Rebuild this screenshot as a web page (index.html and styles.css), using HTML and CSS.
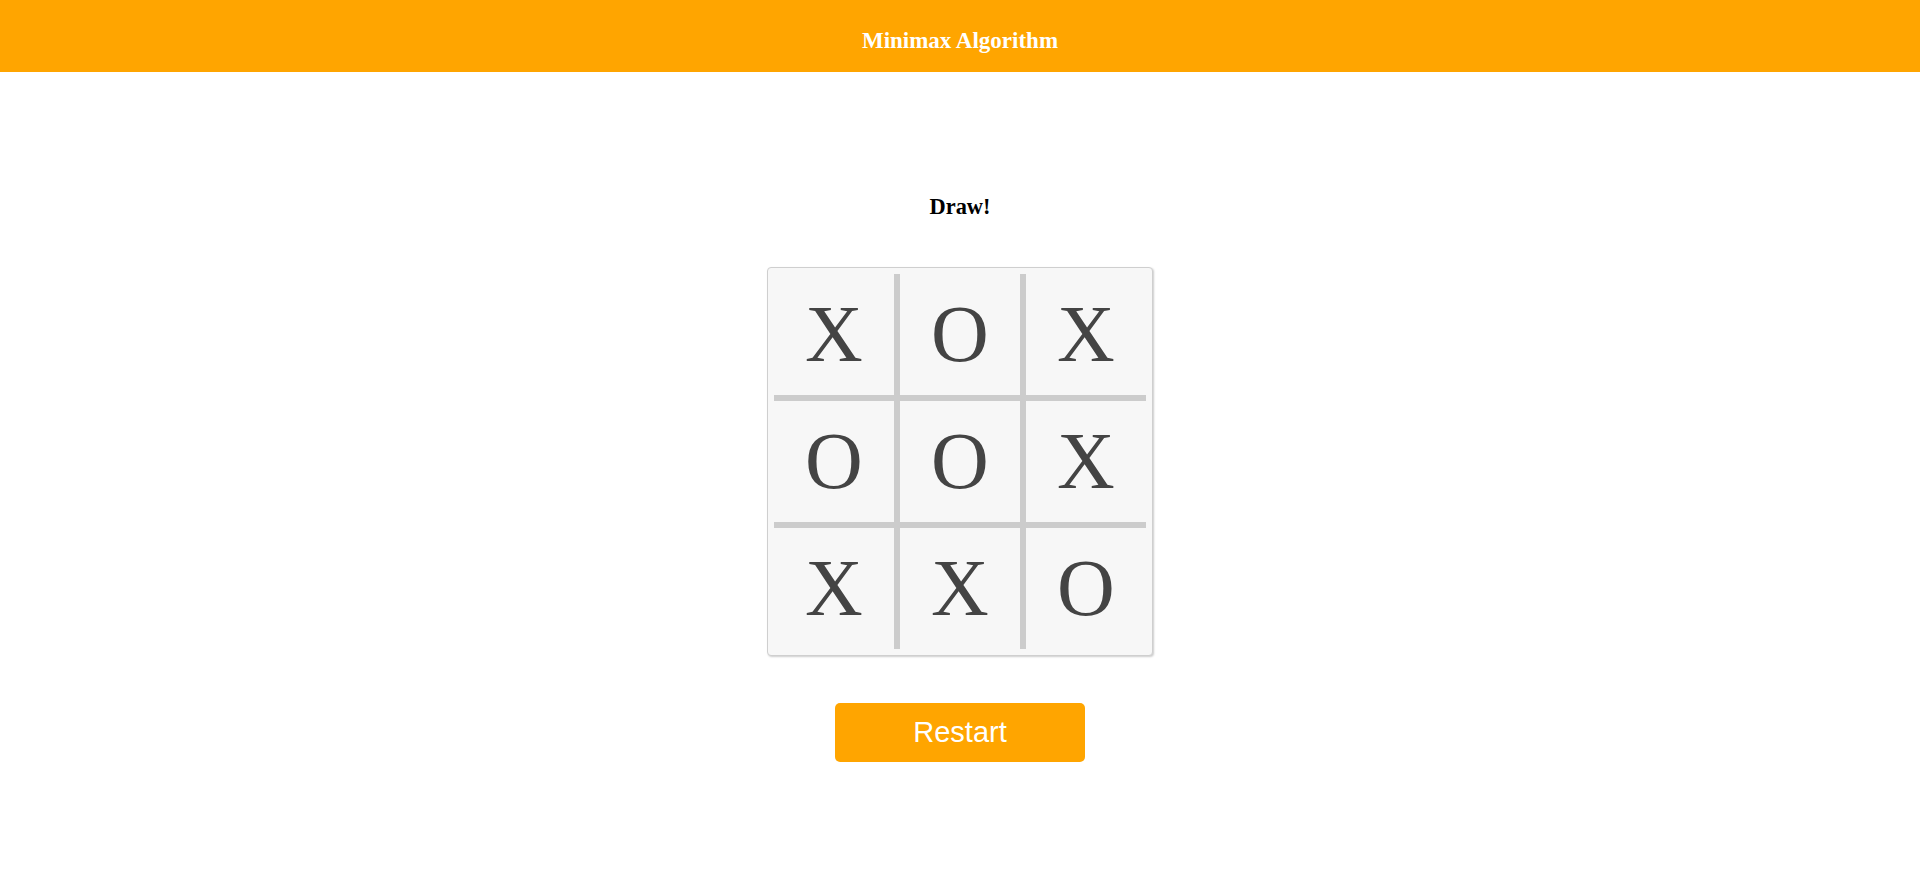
FILE: index.html
```html
<!DOCTYPE html>
<html lang="en">
<head>
<meta charset="utf-8">
<title>Minimax Algorithm</title>
<link rel="stylesheet" href="styles.css">
</head>
<body>
<header class="topbar">
  <h1 class="title">Minimax Algorithm</h1>
</header>
<main class="game">
  <div class="status">Draw!</div>
  <div class="board">
    <div class="grid">
      <div class="cell">X</div>
      <div class="cell">O</div>
      <div class="cell">X</div>
      <div class="cell">O</div>
      <div class="cell">O</div>
      <div class="cell">X</div>
      <div class="cell">X</div>
      <div class="cell">X</div>
      <div class="cell">O</div>
    </div>
  </div>
  <button class="restart" type="button">Restart</button>
</main>
</body>
</html>
```
FILE: styles.css
```css
html, body {
  margin: 0;
  padding: 0;
  background: #fff;
}
body {
  font-family: "Liberation Serif", "Times New Roman", serif;
}
.topbar {
  height: 72px;
  box-sizing: border-box;
  padding-top: 30px;
  background: #ffa500;
  text-align: center;
}
.title {
  margin: 0;
  font-size: 23px;
  line-height: 22px;
  font-weight: bold;
  color: #fff;
}
.game {
  display: flex;
  flex-direction: column;
  align-items: center;
  padding-top: 124px;
}
.status {
  font-size: 22.4px;
  line-height: 22px;
  font-weight: bold;
  color: #000;
  height: 22px;
}
.board {
  margin-top: 49px;
  padding: 6px;
  border: 1px solid #cfcfcf;
  border-radius: 4px;
  background: #f7f7f7;
  box-shadow: 1px 1px 2px rgba(0, 0, 0, 0.2);
}
.grid {
  display: grid;
  grid-template-columns: repeat(3, 120px);
  grid-template-rows: repeat(3, 121px);
  gap: 6px;
  background: #cccccc;
}
.cell {
  background: #f7f7f7;
  display: flex;
  align-items: center;
  justify-content: center;
  padding-bottom: 2px;
  box-sizing: border-box;
  font-family: "Liberation Serif", "Times New Roman", serif;
  font-size: 80px;
  line-height: 1;
  color: #444;
}
.restart {
  margin-top: 47px;
  width: 250px;
  height: 59px;
  border: none;
  border-radius: 5px;
  background: #ffa500;
  color: #fff;
  font-family: "Liberation Sans", Arial, sans-serif;
  font-size: 29px;
  padding: 0;
  cursor: pointer;
}
```
